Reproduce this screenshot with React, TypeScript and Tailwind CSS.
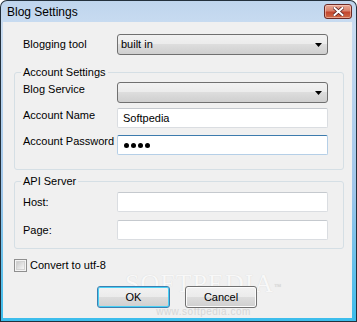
import React from "react";

function Arrow() {
  return (
    <svg width="7" height="4" viewBox="0 0 7 4" className="block">
      <path d="M0 0H7L3.5 4Z" fill="#000" />
    </svg>
  );
}

function Select({ value }: { value?: string }) {
  return (
    <div className="w-[211px] h-[21px] rounded-[3px] border border-[#707070] bg-[linear-gradient(to_bottom,#f2f2f2_0%,#ebebeb_50%,#dddddd_50%,#cfcfcf_100%)] flex items-center justify-between pl-[3px] pr-[5px]">
      <span className="text-[11px] leading-[13px] text-black">{value}</span>
      <Arrow />
    </div>
  );
}

function Input({ value, focused, password }: { value?: string; focused?: boolean; password?: boolean }) {
  return (
    <div
      className={
        "w-[211px] h-[20px] rounded-[2px] bg-white border flex items-center pl-[5px] " +
        (focused ? "border-[#b5cfe7] border-t-[#3d7bad]" : "border-[#dadde1] border-t-[#c5c9ce]")
      }
    >
      {password ? (
        <div className="flex gap-[2px] ml-[1px]">
          <span className="w-[5px] h-[5px] rounded-full bg-black" />
          <span className="w-[5px] h-[5px] rounded-full bg-black" />
          <span className="w-[5px] h-[5px] rounded-full bg-black" />
          <span className="w-[5px] h-[5px] rounded-full bg-black" />
        </div>
      ) : (
        <span className="text-[11px] leading-[13px] text-black">{value}</span>
      )}
    </div>
  );
}

function Button({ label, def }: { label: string; def?: boolean }) {
  return (
    <div
      className={
        "h-[22px] rounded-[3px] border flex items-center justify-center bg-[linear-gradient(to_bottom,#f2f2f2_0%,#ebebeb_50%,#dddddd_50%,#cfcfcf_100%)] " +
        (def ? "w-[73px] border-[#3c7fb1] shadow-[inset_0_0_0_1px_#48d0f5]" : "w-[72px] border-[#707070] shadow-[inset_0_0_0_1px_#fcfcfc]")
      }
    >
      <span className="text-[11px] leading-[13px] text-black">{label}</span>
    </div>
  );
}

export default function App() {
  return (
    <div className="w-[357px] h-[322px] bg-[#23303c] p-[1px] rounded-t-[7px] font-['Liberation_Sans',Arial,sans-serif]">
      <div className="w-full h-full rounded-t-[6px] bg-[linear-gradient(to_bottom,#bfd5ed_0%,#c9dcf1_8%,#9fc6ea_60%,#3bbdec_100%)] flex flex-col">
        {/* Title bar */}
        <div className="h-[21px] flex items-start justify-between">
          <span className="ml-[6px] mt-[4px] text-[12px] leading-[14px] text-black">Blog Settings</span>
          <div className="mt-[3px] mr-[4px] w-[28px] h-[15px] rounded-[3px] border border-[#6d2a26] bg-[linear-gradient(to_bottom,#e8a895_0%,#d9826c_45%,#c3452e_55%,#cf6b48_100%)] flex items-center justify-center shadow-[inset_0_0_0_1px_rgba(255,220,210,0.5)]">
            <svg width="11" height="9" viewBox="0 0 11 9">
              <path d="M1.5 1L9.5 8M9.5 1L1.5 8" stroke="#5a2020" strokeWidth="3.6" strokeLinecap="square" />
              <path d="M1.5 1L9.5 8M9.5 1L1.5 8" stroke="#ffffff" strokeWidth="2" strokeLinecap="square" />
            </svg>
          </div>
        </div>

        {/* Client area */}
        <div className="relative ml-[2px] mr-[4px] mb-[3px] h-[296px] bg-[#f0f0f0] pl-[11px] text-[11px] leading-[13px] text-black">
          {/* Row 1 */}
          <div className="flex items-center mt-[12px]">
            <div className="w-[103px] pl-[9px]">Blogging tool</div>
            <Select value="built in" />
          </div>

          {/* Account Settings */}
          <fieldset className="mt-[11px] w-[330px] border border-[#d5dfe5] rounded-[3px] pt-[3px] pb-[14px]">
            <legend className="ml-[6px] px-[2px] leading-[13px]">Account Settings</legend>
            <div className="flex items-start">
              <div className="w-[102px] pl-[8px] pt-[1px]">Blog Service</div>
              <Select />
            </div>
            <div className="flex items-start mt-[5px]">
              <div className="w-[102px] pl-[8px] pt-[1px]">Account Name</div>
              <Input value="Softpedia" />
            </div>
            <div className="flex items-start mt-[7px]">
              <div className="w-[102px] pl-[8px]">Account Password</div>
              <Input focused password />
            </div>
          </fieldset>

          {/* API Server */}
          <fieldset className="mt-[5px] w-[330px] border border-[#d5dfe5] rounded-[3px] pt-[4px] pb-[8px]">
            <legend className="ml-[6px] px-[2px] leading-[13px]">API Server</legend>
            <div className="flex items-center">
              <div className="w-[102px] pl-[8px]">Host:</div>
              <Input />
            </div>
            <div className="flex items-center mt-[8px]">
              <div className="w-[102px] pl-[8px]">Page:</div>
              <Input />
            </div>
          </fieldset>

          {/* Checkbox */}
          <div className="flex items-center mt-[10px]">
            <div className="w-[13px] h-[13px] border border-[#8f8f8f] bg-[#f4f4f4] flex items-center justify-center">
              <div className="w-[9px] h-[9px] border border-[#d2d2d2] bg-[linear-gradient(135deg,#cbcbcb,#f6f6f6)]" />
            </div>
            <span className="ml-[3px]">Convert to utf-8</span>
          </div>

          {/* Watermark */}
          <div className="absolute left-[122px] top-[249px] pointer-events-none select-none flex flex-col items-center">
            <span className="font-['Liberation_Serif',serif] text-[26px] leading-[26px] tracking-[1px] text-[#f8f8f8] [text-shadow:0_0_1px_#d4d4d4]">
              SOFTPEDIA<sup className="text-[7px] text-[#d4d4d4]">™</sup>
            </span>
            <span className="mt-[9px] text-[10px] leading-[11px] tracking-[0.5px] text-[#d6d6d6]">www.softpedia.com</span>
          </div>

          {/* Buttons */}
          <div className="relative flex mt-[14px] ml-[83px] gap-[15px]">
            <Button label="OK" def />
            <Button label="Cancel" />
          </div>
        </div>
      </div>
    </div>
  );
}
